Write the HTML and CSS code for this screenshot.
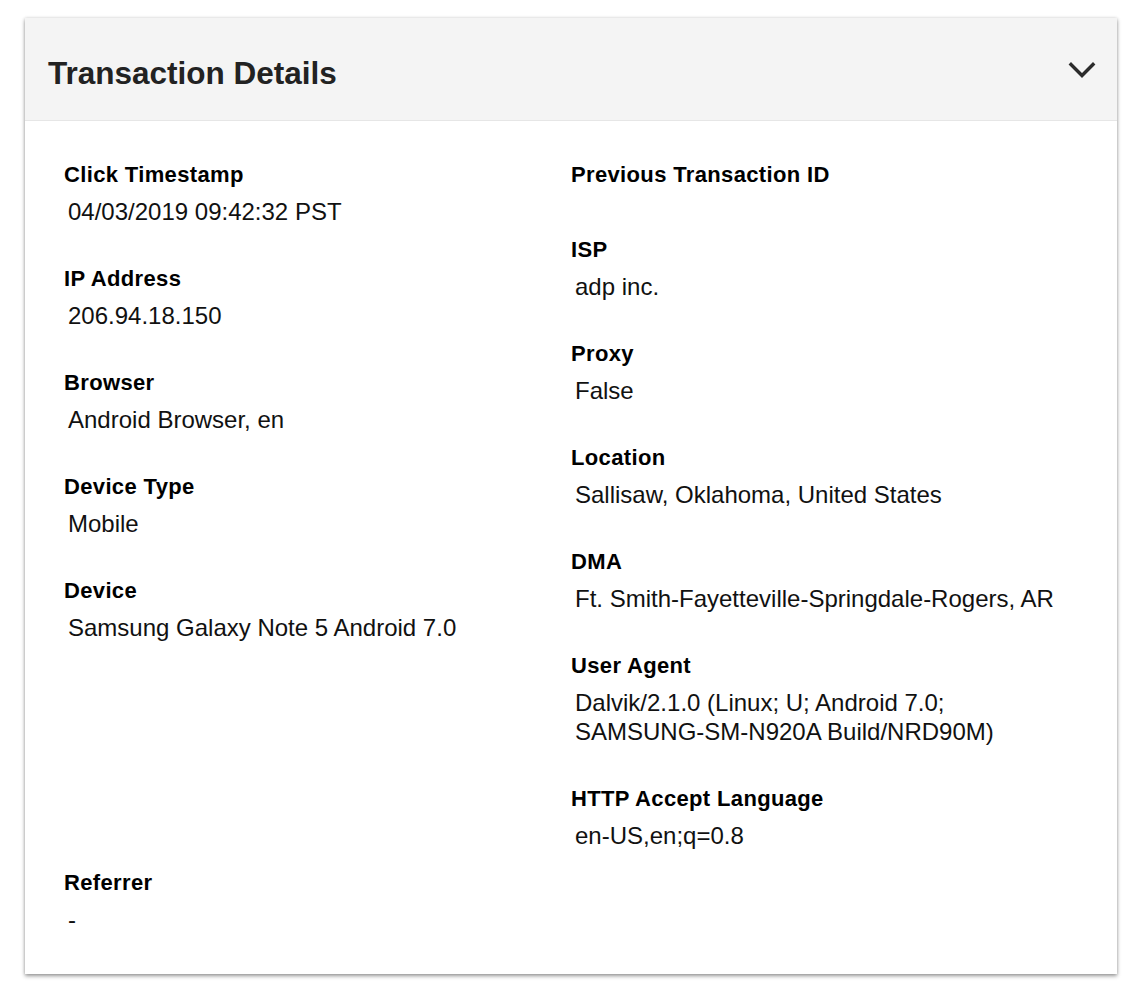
FILE: index.html
```html
<!DOCTYPE html>
<html lang="en">
<head>
<meta charset="utf-8">
<title>Transaction Details</title>
<link rel="stylesheet" href="styles.css">
</head>
<body>
<section class="card">
  <header class="card-header">
    <h2 class="card-title">Transaction Details</h2>
    <svg class="chevron" width="28" height="18" viewBox="0 0 28 18" aria-hidden="true">
      <polyline points="3,3.5 14,14.5 25,3.5" fill="none" stroke="#2b2b2b" stroke-width="3.4" stroke-linecap="square"/>
    </svg>
  </header>
  <div class="card-body">
    <div class="columns">
      <div class="col">
        <div class="field"><div class="label">Click Timestamp</div><div class="value">04/03/2019 09:42:32 PST</div></div>
        <div class="field"><div class="label">IP Address</div><div class="value">206.94.18.150</div></div>
        <div class="field"><div class="label">Browser</div><div class="value">Android Browser, en</div></div>
        <div class="field"><div class="label">Device Type</div><div class="value">Mobile</div></div>
        <div class="field"><div class="label">Device</div><div class="value">Samsung Galaxy Note 5 Android 7.0</div></div>
      </div>
      <div class="col">
        <div class="field"><div class="label">Previous Transaction ID</div><div class="value"></div></div>
        <div class="field"><div class="label">ISP</div><div class="value">adp inc.</div></div>
        <div class="field"><div class="label">Proxy</div><div class="value">False</div></div>
        <div class="field"><div class="label">Location</div><div class="value">Sallisaw, Oklahoma, United States</div></div>
        <div class="field"><div class="label">DMA</div><div class="value">Ft. Smith-Fayetteville-Springdale-Rogers, AR</div></div>
        <div class="field"><div class="label">User Agent</div><div class="value">Dalvik/2.1.0 (Linux; U; Android 7.0;<br>SAMSUNG-SM-N920A Build/NRD90M)</div></div>
        <div class="field"><div class="label">HTTP Accept Language</div><div class="value">en-US,en;q=0.8</div></div>
      </div>
    </div>
    <div class="field referrer"><div class="label">Referrer</div><div class="value">-</div></div>
  </div>
</section>
</body>
</html>
```

FILE: styles.css
```css
html, body {
  margin: 0;
  padding: 0;
  background: #ffffff;
}

body {
  padding: 18px 23px 9px 25px;
  font-family: "Liberation Sans", Arial, Helvetica, sans-serif;
  color: #111;
}

.card {
  background: #fff;
  box-shadow: 0 2px 4px rgba(0, 0, 0, 0.4), 0 0 3px rgba(0, 0, 0, 0.12);
}

.card-header {
  display: flex;
  align-items: center;
  justify-content: space-between;
  height: 103px;
  box-sizing: border-box;
  padding: 8px 21px 0 23px;
  background: #f4f4f4;
  border-bottom: 1px solid #e6e6e6;
}

.card-title {
  margin: 0;
  font-size: 31.5px;
  font-weight: 700;
  line-height: 36px;
  color: #222;
}

.chevron {
  display: block;
  margin-top: -6px;
}

.card-body {
  padding: 41px 39px 40px 39px;
}

.columns {
  display: grid;
  grid-template-columns: 1fr 1fr;
}

.col {
  display: flex;
  flex-direction: column;
  gap: 40px;
}

.field {
  display: flex;
  flex-direction: column;
  gap: 10px;
}

.label {
  font-size: 22px;
  font-weight: 700;
  line-height: 25px;
  letter-spacing: 0.35px;
  color: #000;
}

.value {
  font-size: 24px;
  line-height: 29px;
  padding-left: 4px;
  color: #111;
}

.referrer {
  margin-top: 20px;
}
```
